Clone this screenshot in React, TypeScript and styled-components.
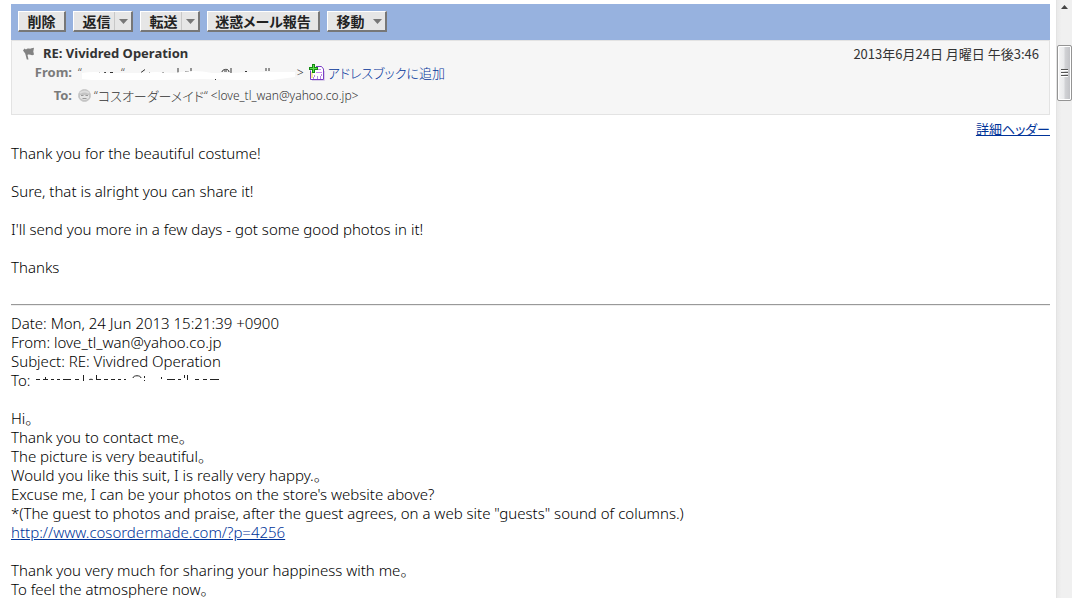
import React from 'react';
import styled, { createGlobalStyle } from 'styled-components';

const GlobalStyle = createGlobalStyle`
  *, *::before, *::after { box-sizing: border-box; }
  body { margin: 0; background: #fff; }
`;

const Page = styled.div`
  display: flex;
  height: 100vh;
  overflow: hidden;
  color: #000;
  font-family: 'Noto Sans', 'Noto Sans CJK JP', sans-serif;
  font-size: 15px;
  line-height: 19px;
`;

const Message = styled.main`
  flex: 1;
  min-width: 0;
  padding: 4px 6px 0 11px;
  overflow: hidden;
`;

const Toolbar = styled.div`
  display: flex;
  gap: 7px;
  height: 36px;
  padding: 7px;
  background: #97b2df;
`;

const ToolButton = styled.button<{ $width: number }>`
  display: flex;
  align-items: center;
  justify-content: center;
  width: ${(p) => p.$width}px;
  height: 21px;
  padding: 0;
  border: 1px solid #fff;
  border-right: 2px solid #777;
  border-bottom: 2px solid #777;
  background: #e6e6e6;
  color: #222;
  font-family: 'Noto Sans CJK JP', sans-serif;
  font-feature-settings: 'palt';
  font-size: 14px;
  font-weight: 700;
  line-height: 18px;
  white-space: nowrap;
`;

const ButtonText = styled.span<{ $menu?: boolean }>`
  flex: 1;
  padding-left: ${(p) => (p.$menu ? 5 : 0)}px;
  text-align: center;
`;

const Arrow = styled.span<{ $split?: boolean }>`
  display: flex;
  align-items: center;
  justify-content: center;
  width: 17px;
  height: 18px;
  border-left: 1px solid ${(p) => (p.$split ? '#c8c8c8' : 'transparent')};
`;

const HeaderPanel = styled.header`
  display: flex;
  justify-content: space-between;
  height: 75px;
  padding: 3px 10px 0 11px;
  border: 1px solid #e3e3e3;
  background: #f6f6f6;
  color: #333;
  font-size: 13px;
`;

const Subject = styled.h1`
  display: flex;
  align-items: center;
  gap: 8px;
  margin: 0;
  font-size: 13px;
  font-weight: 700;
  line-height: 19px;
`;

const Field = styled.div`
  display: flex;
  align-items: center;
  height: 19px;
  margin-bottom: 4px;
  font-size: 12px;
  font-weight: 300;
  white-space: pre;
`;

const FieldLabel = styled.span`
  width: 49px;
  margin-right: 6px;
  text-align: right;
  color: #7b7b7b;
  font-size: 13px;
  font-weight: 700;
`;

const Kana = styled.span`
  font-family: 'Noto Sans CJK JP', sans-serif;
  font-feature-settings: 'palt';
  font-size: 13px;
`;

const Link = styled.a`
  color: #039;
`;

const AddressLink = styled.a`
  display: flex;
  align-items: center;
  gap: 3px;
  margin-left: 5px;
  color: #039;
  text-decoration: none;
`;

const Received = styled.time`
  font-family: 'Noto Sans CJK JP', sans-serif;
`;

const DetailRow = styled.div`
  display: flex;
  justify-content: flex-end;
  height: 29px;
  padding-top: 4px;
`;

const Body = styled.div`
  font-weight: 300;
`;

const Paragraph = styled.p`
  margin: 0 0 19px;
`;

const Divider = styled.hr`
  height: 2px;
  margin: 27px 0 8px;
  border: 0;
  border-top: 1px solid #999;
  border-bottom: 1px solid #eee;
`;

const Masked = styled.svg`
  display: inline-block;
  vertical-align: top;
`;

const ScrollTrack = styled.div`
  display: flex;
  flex-direction: column;
  align-items: center;
  width: 16px;
  padding-top: 5px;
  border-left: 1px solid #e3e3e3;
  background: linear-gradient(90deg, #e9e9e9, #f0f0f0 30%, #f0f0f0);
`;

const ScrollThumb = styled.div`
  display: flex;
  align-items: center;
  justify-content: center;
  width: 15px;
  height: 56px;
  margin-top: 36px;
  border: 1px solid #949494;
  border-radius: 2px;
  box-shadow: inset 0 0 0 1px #fff;
  background: linear-gradient(90deg, #f5f5f5, #e8e9eb 48%, #d2d3d6 52%, #bfc0c4);
`;

const DownArrow = () => (
  <svg width="9" height="5" viewBox="0 0 9 5" aria-hidden="true">
    <path d="M0 0h9L4.500 5z" fill="#777" />
  </svg>
);

const Flag = () => (
  <svg width="12" height="13" viewBox="0 0 12 13" aria-hidden="true">
    <path d="M0 3.500 1.500 1.500 3 2.500C5 .4 6.500 2.500 8.500 1.300L11 .8 10.300 4.500 11 7.500C8.500 9.300 6.500 6.500 4.500 8L5.500 12.500H3.800L2.200 6.500z" fill="#828282" />
  </svg>
);

const AddressBookIcon = () => (
  <svg width="16" height="17" viewBox="0 0 16 17" aria-hidden="true">
    <path d="M3 16.500h12.500V7" fill="none" stroke="#d9cfe8" />
    <path d="M1.500 6.500V15.500H14.500V5L12.500 2.500H7" fill="#fff" stroke="#7a3fc4" />
    <path d="M2 8h2v6H2z" fill="#f6ef9c" />
    <path d="M8 5.500h4M7 8.500h6" stroke="#c98af0" />
    <path d="M4.500 15v-2M5.500 13v-2M8.500 15v-3M11.500 15v-3M12.500 12v-2" stroke="#b48ae0" />
    <path d="M3 0h3v3h3v3H6v3H3V6H0V3h3z" fill="#128a12" />
    <path d="M4 1h1v3h3v1H5v3H4V5H1V4h3z" fill="#5fdc4a" />
  </svg>
);

const FaceIcon = () => (
  <svg width="13" height="13" viewBox="0 0 13 13" aria-hidden="true">
    <circle cx="6.500" cy="6.500" r="6" fill="#c4c4c4" stroke="#c8c8c8" />
    <path d="M2 4Q6.500 1 11 4" fill="none" stroke="#ddd" strokeWidth="2" />
    <path d="M2 6h9v3Q6.500 13 2 9z" fill="#e4e4e4" />
    <path d="M3 6.500h2.500M7.500 6.500H10M4.500 9.500h4" stroke="#999" />
  </svg>
);

/* Blanked-out sender address: only the tips of a few strokes stay visible. */
const MaskedSender = () => (
  <Masked width="215" height="19" viewBox="0 0 215 19" role="img" aria-label="hidden address">
    <text x="39" y="14" fontSize="12" fill="#333">“</text>
    <path d="M17 9.500h1M22 9.500h2M28 9.500h3M59 9.500l4-3M67 9.500h1M80 9.500h2M96 5v5M103 8.500h4M109 5v4M140 9c0-3 7-4 7 0M142 8h3M149 5v5M163 8.500h2M184 5v3M187 5v3" fill="none" stroke="#333" />
    <path d="M0 10Q12 8 24 10H56L74 9 92 10Q112 6 130 10H148L170 9 213 9V14L190 17H156L120 16 80 17H10L0 16z" fill="#fff" />
    <path d="M133 16h1v1h-1z" fill="#333" />
  </Masked>
);

const MaskedRecipient = () => (
  <Masked width="188" height="19" viewBox="0 0 188 19" role="img" aria-label="hidden address">
    <path d="M2 8.500h4M9 8.500h5M11.500 6v3M17 8.500h3M23 8.500h3M29 8.500h8M41 8.500h4M49.500 4v6M55 9c0-1 4-1 4 0M62.500 4v5M63 8.500h4M70 8.500h4M77 8.500h4M84 8.500h3M90 8.500h2M99 7c0-3 8-3 8 0M110.500 5v2M110.500 9v1M127.500 6v2M133 8.500h8M144 8.500h3M150.500 4v3M153.500 4v5M161 8.500h4M169 8.500h4M176 8.500h9" fill="none" stroke="#222" />
  </Masked>
);

const Action = ({ label, width, menu, split }: { label: string; width: number; menu?: boolean; split?: boolean }) => (
  <ToolButton type="button" $width={width}>
    <ButtonText $menu={menu}>{label}</ButtonText>
    {menu && (
      <Arrow $split={split}>
        <DownArrow />
      </Arrow>
    )}
  </ToolButton>
);

export default function App() {
  return (
    <Page>
      <GlobalStyle />
      <Message>
        <Toolbar role="toolbar">
          <Action label="削除" width={48} />
          <Action label="返信" width={60} menu split />
          <Action label="転送" width={60} menu split />
          <Action label="迷惑メール報告" width={113} />
          <Action label="移動" width={60} menu />
        </Toolbar>
        <HeaderPanel>
          <div>
            <Subject>
              <Flag />
              RE: Vividred Operation
            </Subject>
            <Field>
              <FieldLabel>From:</FieldLabel>
              “<MaskedSender />&gt;
              <AddressLink href="#address">
                <AddressBookIcon />
                <Kana>アドレスブックに追加</Kana>
              </AddressLink>
            </Field>
            <Field>
              <FieldLabel>To:</FieldLabel>
              <FaceIcon />
              {' “'}
              <Kana>コスオーダーメイド</Kana>
              {'“ <love_tl_wan@yahoo.co.jp>'}
            </Field>
          </div>
          <Received dateTime="2013-06-24T15:46">2013年6月24日 月曜日 午後3:46</Received>
        </HeaderPanel>
        <DetailRow>
          <Link href="#headers">
            <Kana>詳細ヘッダー</Kana>
          </Link>
        </DetailRow>
        <Body>
          <Paragraph>Thank you for the beautiful costume!</Paragraph>
          <Paragraph>Sure, that is alright you can share it!</Paragraph>
          <Paragraph>I'll send you more in a few days - got some good photos in it!</Paragraph>
          <Paragraph>Thanks</Paragraph>
          <Divider />
          <Paragraph>
            Date: Mon, 24 Jun 2013 15:21:39 +0900
            <br />
            From: love_tl_wan@yahoo.co.jp
            <br />
            Subject: RE: Vividred Operation
            <br />
            To: <MaskedRecipient />
          </Paragraph>
          <Paragraph>
            Hi。
            <br />
            Thank you to contact me。
            <br />
            The picture is very beautiful。
            <br />
            Would you like this suit, I is really very happy.。
            <br />
            Excuse me, I can be your photos on the store's website above?
            <br />
            *(The guest to photos and praise, after the guest agrees, on a web site "guests" sound of columns.)
            <br />
            <Link href="#guest">http://www.cosordermade.com/?p=4256</Link>
          </Paragraph>
          <Paragraph>
            Thank you very much for sharing your happiness with me。
            <br />
            To feel the atmosphere now。
          </Paragraph>
        </Body>
      </Message>
      <ScrollTrack aria-hidden="true">
        <svg width="7" height="4" viewBox="0 0 7 4">
          <path d="M0 4 3.500 0 7 4z" fill="#444" />
        </svg>
        <ScrollThumb>
          <svg width="7" height="8" viewBox="0 0 7 8">
            <path d="M0 .5h7M0 3.500h7M0 6.500h7" stroke="#555" />
            <path d="M0 1.500h7M0 4.500h7M0 7.500h7" stroke="#fff" />
          </svg>
        </ScrollThumb>
      </ScrollTrack>
    </Page>
  );
}
